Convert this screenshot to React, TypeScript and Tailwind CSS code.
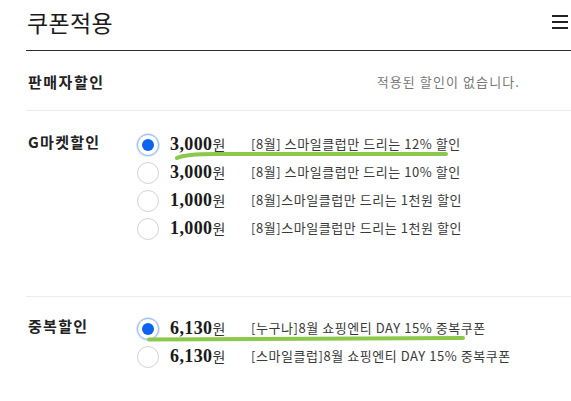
import React from 'react'

const KR = { fontFamily: '"Noto Sans CJK KR", "Noto Sans", sans-serif' }

type Coupon = {
  price: string
  label: string
  checked?: boolean
}

const gmarket: Coupon[] = [
  { price: '3,000', label: '[8월] 스마일클럽만 드리는 12% 할인', checked: true },
  { price: '3,000', label: '[8월] 스마일클럽만 드리는 10% 할인' },
  { price: '1,000', label: '[8월]스마일클럽만 드리는 1천원 할인' },
  { price: '1,000', label: '[8월]스마일클럽만 드리는 1천원 할인' },
]

const duplicate: Coupon[] = [
  { price: '6,130', label: '[누구나]8월 쇼핑엔티 DAY 15% 중복쿠폰', checked: true },
  { price: '6,130', label: '[스마일클럽]8월 쇼핑엔티 DAY 15% 중복쿠폰' },
]

const Radio = ({ checked }: { checked?: boolean }) =>
  checked ? (
    <span className="w-[22px] h-[22px] rounded-full border border-[#8db8f7] bg-white flex items-center justify-center shrink-0 shadow-[0_0_0_1px_#dbe8fc]">
      <span className="w-[12px] h-[12px] rounded-full bg-[#0b63f0]" />
    </span>
  ) : (
    <span className="w-[22px] h-[22px] rounded-full border-[1.5px] border-[#d4d4d4] bg-white shrink-0" />
  )

const CouponRow = ({ c }: { c: Coupon }) => (
  <div className="h-[28px] flex items-center">
    <Radio checked={c.checked} />
    <div className="w-[81px] ml-[11px] flex items-baseline shrink-0 -mt-[2px]">
      <span
        className="text-[18px] font-bold text-[#1a1a1a] tracking-[0.4px] leading-none"
        style={{ fontFamily: '"Liberation Serif", serif' }}
      >
        {c.price}
      </span>
      <span className="text-[14px] text-[#333] leading-none" style={KR}>
        원
      </span>
    </div>
    <span className="text-[13px] text-[#3a3a3a] whitespace-nowrap leading-none tracking-[0.55px] -mt-[3px]" style={KR}>
      {c.label}
    </span>
  </div>
)

const Section = ({ title, coupons, className }: { title: string; coupons: Coupon[]; className: string }) => (
  <div className={`flex ${className}`}>
    <div className="w-[111px] shrink-0">
      <div className="h-[28px] flex items-center -mt-[3px] pl-[2px] text-[15px] font-bold text-[#222] tracking-[1.3px]" style={KR}>
        {title}
      </div>
    </div>
    <div className="flex flex-col">
      {coupons.map((c, i) => (
        <CouponRow key={i} c={c} />
      ))}
    </div>
  </div>
)

export default function App() {
  return (
    <div className="w-[571px] h-[401px] bg-white relative overflow-hidden" style={KR}>
      <div className="ml-[26px]">
        {/* Header */}
        <div className="h-[51px] border-b border-[#2a2a2a] flex items-center justify-between pb-[6px]">
          <h1 className="text-[23px] text-[#1a1a1a] pl-[1px] tracking-[0.3px] leading-none">쿠폰적용</h1>
          <div className="flex flex-col gap-[4px] mr-[3px]">
            <span className="w-[16px] h-[2px] bg-[#222]" />
            <span className="w-[16px] h-[2px] bg-[#222]" />
            <span className="w-[16px] h-[2px] bg-[#222]" />
          </div>
        </div>

        {/* Seller */}
        <div className="h-[60px] border-b border-[#ececec] flex items-center justify-between pt-[3px] pr-[51px]">
          <span className="text-[15px] font-bold text-[#222] pl-[2px] tracking-[1.5px]">판매자할인</span>
          <span className="text-[13px] text-[#777] tracking-[1.1px]">적용된 할인이 없습니다.</span>
        </div>

        <Section title="G마켓할인" coupons={gmarket} className="pt-[20px] h-[186px] border-b border-[#ececec]" />
        <Section title="중복할인" coupons={duplicate} className="pt-[18px]" />
      </div>

      {/* highlighter marks */}
      <svg className="absolute left-0 top-0 pointer-events-none" width="571" height="401">
        <path
          d="M177 158 C183 155, 195 154, 215 154 L446 154"
          stroke="#8cc84b"
          strokeWidth="4"
          strokeLinecap="round"
          fill="none"
        />
        <path
          d="M149 339.5 C170 338.5, 300 338, 463 338"
          stroke="#8cc84b"
          strokeWidth="4"
          strokeLinecap="round"
          fill="none"
        />
      </svg>
    </div>
  )
}
